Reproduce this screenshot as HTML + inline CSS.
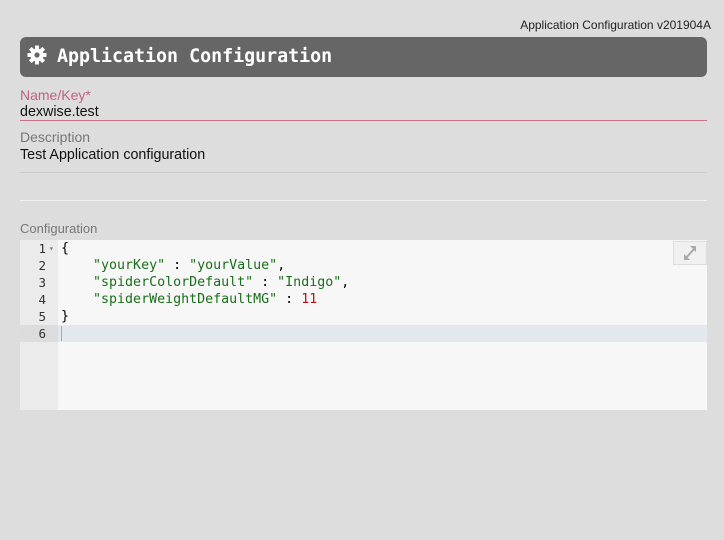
<!DOCTYPE html>
<html><head><style>
body{margin:0;width:724px;height:540px;background:#dddddd;font-family:"Liberation Sans",sans-serif;position:relative;overflow:hidden}
.a{position:absolute}
.ver{right:13px;top:18px;font-size:12px;color:#222}
.hdr{left:20px;top:37px;width:687px;height:40px;background:#666;border-radius:6px;color:#fff}
.hdr span{position:absolute;left:37px;top:9px;font-family:"DejaVu Sans Mono",monospace;font-weight:bold;font-size:18.3px}
.lbl{font-size:14px;color:#777}
.val{font-size:14.3px;color:#111}
.ed{left:20px;top:240px;width:687px;height:170px;background:#f7f7f7}
.gut{position:absolute;left:0;top:0;width:38px;height:170px;background:#ebebeb}
.code{font-family:"DejaVu Sans Mono",monospace;font-size:13.3px;line-height:17px}
.ln{position:absolute;left:0;width:26px;text-align:right;color:#333;font-size:12.5px}
.s{color:#1a6e1a}.n{color:#b5131a}
</style></head><body>
<div class="a ver">Application Configuration v201904A</div>
<div class="a hdr">
<svg class="a" style="left:7px;top:8px" width="20" height="20" viewBox="0 0 20 20"><g fill="#fff"><circle cx="10" cy="10" r="6.5"/><g id="t"><rect x="8" y="0.5" width="4" height="5" rx="0.5"/><rect x="8" y="14.5" width="4" height="5" rx="0.5"/></g><use href="#t" transform="rotate(45 10 10)"/><use href="#t" transform="rotate(90 10 10)"/><use href="#t" transform="rotate(135 10 10)"/></g><circle cx="10" cy="10" r="2.6" fill="#666"/></svg>
<span>Application Configuration</span></div>
<div class="a lbl" style="left:20px;top:87px;color:#c0627f">Name/Key*</div>
<div class="a val" style="left:20px;top:104px">dexwise.test</div>
<div class="a" style="left:20px;top:120px;width:687px;height:1px;background:#c9738b"></div>
<div class="a lbl" style="left:20px;top:129px">Description</div>
<div class="a val" style="left:20px;top:147px">Test Application configuration</div>
<div class="a" style="left:20px;top:172px;width:687px;height:1px;background:#ccc"></div>
<div class="a" style="left:20px;top:200px;width:687px;height:1px;background:#f2f2f2"></div>
<div class="a lbl" style="left:20px;top:221px;font-size:13px">Configuration</div>
<div class="a ed">
<div class="gut"></div>
<div class="a" style="left:0;top:85px;width:687px;height:17px;background:#e3e8ef"></div>
<div class="a" style="left:0;top:85px;width:38px;height:17px;background:#dcdcdc"></div>
<div class="a code" style="left:0;top:0;width:687px">
<div class="ln" style="top:0">1</div><div class="ln" style="top:17px">2</div><div class="ln" style="top:34px">3</div><div class="ln" style="top:51px">4</div><div class="ln" style="top:68px">5</div><div class="ln" style="top:85px">6</div>
<div class="a" style="left:29px;top:0;font-size:8px;color:#777">▾</div>
<div class="a" style="left:41px;top:0;white-space:pre">{
    <span class="s">"yourKey"</span> : <span class="s">"yourValue"</span>,
    <span class="s">"spiderColorDefault"</span> : <span class="s">"Indigo"</span>,
    <span class="s">"spiderWeightDefaultMG"</span> : <span class="n">11</span>
}</div>
<div class="a" style="left:41px;top:86px;width:1px;height:15px;background:#aaa"></div>
</div>
<div class="a" style="left:653px;top:1px;width:32px;height:22px;border:1px solid #ddd;background:#f0f0f0">
<svg width="32" height="22" viewBox="0 0 32 22"><g stroke="#aaa" stroke-width="2" fill="#aaa"><line x1="11" y1="17" x2="21" y2="6"/><polygon points="22,4 22,10 16,4" stroke="none"/><polygon points="10,18 10,12 16,18" stroke="none"/></g></svg></div>
</div>
</body></html>
